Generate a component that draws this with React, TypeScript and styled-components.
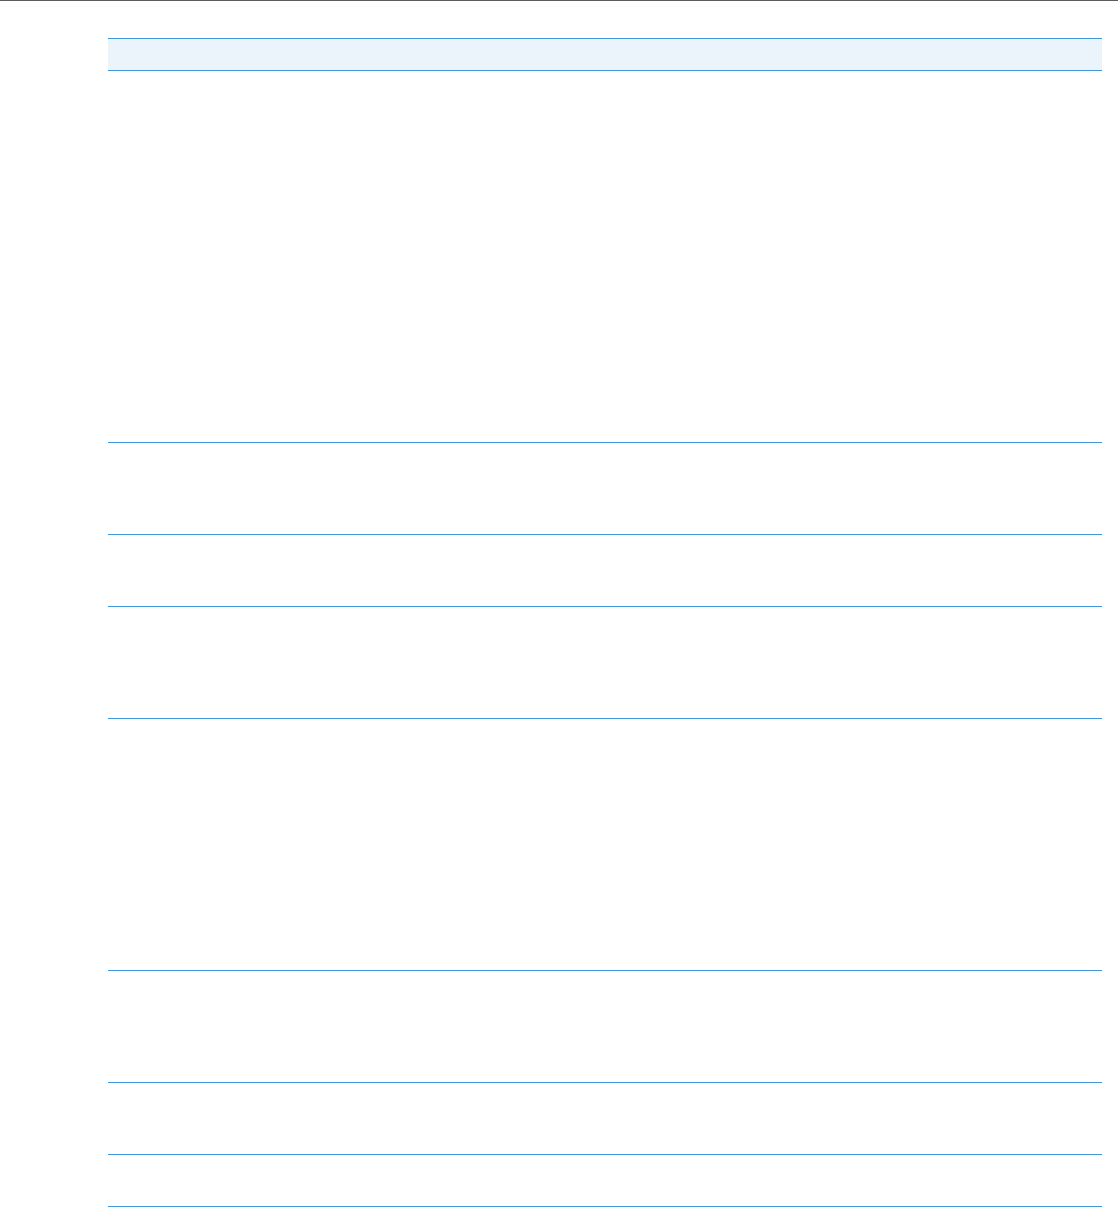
import React from 'react';
import styled, { createGlobalStyle } from 'styled-components';

const GlobalStyle = createGlobalStyle`
  html, body {
    margin: 0;
    padding: 0;
    background: #ffffff;
    font-family: "Liberation Sans", Arial, sans-serif;
  }
`;

const TopRule = styled.div`
  height: 1px;
  background: #5c5c5c;
`;

const Page = styled.div`
  padding: 37px 16px 0 108px;
`;

const Table = styled.div`
  width: 994px;
  display: flex;
  flex-direction: column;
`;

const HeaderRow = styled.div`
  height: 31px;
  background: #ebf3fb;
  border-top: 1px solid #3f98dc;
  border-bottom: 1px solid #3f98dc;
`;

const Row = styled.div<{ $h: number }>`
  height: ${(p) => p.$h}px;
  border-bottom: 1px solid #3f98dc;
`;

const rows = [371, 91, 71, 111, 251, 111, 71, 51];

export default function App(): React.ReactElement {
  return (
    <>
      <GlobalStyle />
      <TopRule />
      <Page>
        <Table>
          <HeaderRow />
          {rows.map((h, i) => (
            <Row key={i} $h={h} />
          ))}
        </Table>
      </Page>
    </>
  );
}
